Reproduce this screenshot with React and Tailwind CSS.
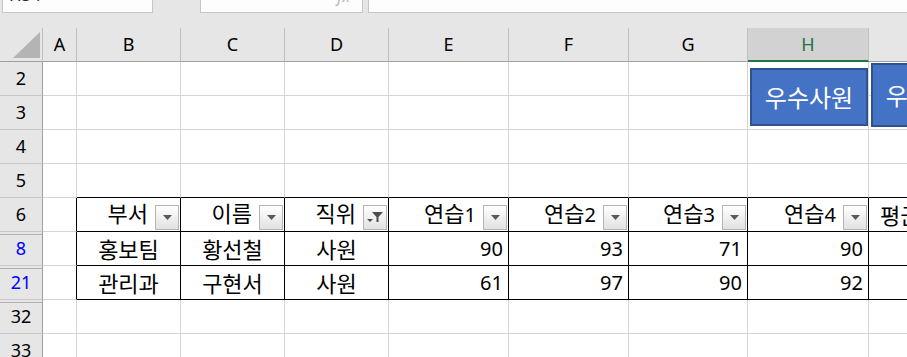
import React from "react";

const cols = [
  { k: "A", w: "w-[34px]" },
  { k: "B", w: "w-[104px]" },
  { k: "C", w: "w-[104px]" },
  { k: "D", w: "w-[104px]" },
  { k: "E", w: "w-[120px]" },
  { k: "F", w: "w-[120px]" },
  { k: "G", w: "w-[119px]" },
  { k: "H", w: "w-[121px]" },
  { k: "I", w: "w-[120px]" },
];

const header = ["부서", "이름", "직위", "연습1", "연습2", "연습3", "연습4"];
const data = {
  8: ["홍보팀", "황선철", "사원", 90, 93, 71, 90],
  21: ["관리과", "구현서", "사원", 61, 97, 90, 92],
};
const rows = [2, 3, 4, 5, 6, 8, 21, 32, 33];
const hiddenBefore = [8, 21, 32];

// hangul a bit larger than the digits, like Malgun Gothic
function Label({ text }) {
  const m = String(text).match(/^(\D*)(\d*)$/);
  return (
    <span className="leading-none whitespace-nowrap">
      {m[1] && <span className="text-[22px]">{m[1]}</span>}
      {m[2] && <span className="text-[20px]">{m[2]}</span>}
    </span>
  );
}

function DropDown({ filter }) {
  return (
    <div className="self-end mb-[1px] mr-[1px] w-[24px] h-[25px] shrink-0 border border-[#b4b4b4] bg-gradient-to-b from-white to-[#e2e2e2] flex items-center justify-center">
      {filter ? (
        <svg width="18" height="13" viewBox="0 0 18 13">
          <polygon points="6,1 17,1 12.5,6 12.5,11 10.5,11 10.5,6" fill="#4d4d4d" />
          <polygon points="1,8 7,8 4,11" fill="#4d4d4d" />
        </svg>
      ) : (
        <svg width="9" height="5" viewBox="0 0 9 5">
          <polygon points="0,0 9,0 4.5,5" fill="#595959" />
        </svg>
      )}
    </div>
  );
}

function Cell({ row, ci }) {
  const col = cols[ci];
  const inTable = row === 6 || row === 8 || row === 21;
  const tableCol = ci >= 1;
  let border = "border-r border-b border-[#d4d4d4]";
  if (inTable && tableCol) border = "border-r border-b border-black";
  else if (inTable && ci === 0) border = "border-r border-b border-r-black border-b-[#d4d4d4]";
  else if (row === 5 && tableCol) border = "border-r border-b border-r-[#d4d4d4] border-b-black";

  let content = null;
  if (row === 6 && ci >= 1 && ci <= 7) {
    content = (
      <div className="flex h-full items-center justify-end">
        <span className="mr-[7px]">
          <Label text={header[ci - 1]} />
        </span>
        <DropDown filter={ci === 3} />
      </div>
    );
  } else if (row === 6 && ci === 8) {
    content = (
      <div className="flex h-full items-center pl-[11px]">
        <Label text="평균" />
      </div>
    );
  } else if (data[row] && ci >= 1 && ci <= 3) {
    content = (
      <div className="flex h-full items-center justify-center">
        <Label text={data[row][ci - 1]} />
      </div>
    );
  } else if (data[row] && ci >= 4 && ci <= 7) {
    content = (
      <div className="flex h-full items-center justify-end pr-[5px]">
        <Label text={data[row][ci - 1]} />
      </div>
    );
  }

  return <div className={`${col.w} h-[34px] shrink-0 bg-white ${border}`}>{content}</div>;
}

export default function App() {
  return (
    <div className="relative w-[907px] h-[357px] overflow-hidden bg-[#e6e6e6] font-['Noto_Sans','Noto_Sans_CJK_KR',sans-serif] text-black">
      {/* formula bar */}
      <div className="flex h-[28px] items-start">
        <div className="ml-[2px] w-[151px] h-[13px] bg-[#fdfdfd] border border-t-0 border-[#c6c6c6] overflow-hidden relative">
          <span className="absolute left-[6px] -top-[14px] text-[17px] leading-none text-[#222]">H34</span>
        </div>
        <div className="ml-[47px] w-[163px] h-[13px] bg-[#fdfdfd] border border-t-0 border-[#c6c6c6] overflow-hidden relative">
          <span className="absolute right-[12px] -top-[12px] text-[16px] italic leading-none text-[#b8b8b8]">fx</span>
        </div>
        <div className="ml-[5px] flex-1 h-[13px] bg-[#fdfdfd] border border-t-0 border-r-0 border-[#c6c6c6]" />
      </div>

      {/* column header */}
      <div className="flex h-[34px]">
        <div className="relative w-[43px] shrink-0 border-r border-b border-r-[#c0c0c0] border-b-[#a0a0a0]">
          <svg className="absolute left-[13px] top-[4px]" width="27" height="26" viewBox="0 0 27 26">
            <polygon points="27,0 27,26 0,26" fill="#b4b4b4" />
          </svg>
        </div>
        {cols.map((c) =>
          c.k === "H" ? (
            <div
              key={c.k}
              className={`${c.w} shrink-0 flex items-center justify-center bg-[#d2d2d2] border-r border-r-[#c0c0c0] border-b-2 border-b-[#217346] text-[#217346] text-[18px]`}
            >
              {c.k}
            </div>
          ) : (
            <div
              key={c.k}
              className={`${c.w} shrink-0 flex items-center justify-center border-r border-b border-r-[#c0c0c0] border-b-[#a0a0a0] text-[18px]`}
            >
              {c.k}
            </div>
          )
        )}
      </div>

      {/* rows */}
      <div>
        {rows.map((r) => (
          <div key={r} className="flex">
            <div
              className={`relative w-[43px] h-[34px] shrink-0 flex items-center justify-center border-r border-b border-r-[#9f9f9f] border-b-[#c8c8c8] text-[18px] ${
                r === 8 || r === 21 ? "text-[#0000ff]" : "text-black"
              }`}
            >
              {hiddenBefore.includes(r) && <div className="absolute left-0 right-0 top-[2px] h-px bg-[#b0b0b0]" />}
              {r}
            </div>
            {cols.map((c, ci) => (
              <Cell key={c.k} row={r} ci={ci} />
            ))}
          </div>
        ))}
      </div>

      {/* shapes */}
      <div className="absolute left-[750px] top-[68px] w-[118px] h-[58px] bg-[#4472c4] border-2 border-[#2f528f] flex items-center justify-center text-white text-[24px] whitespace-nowrap font-['Noto_Sans_CJK_KR',sans-serif]">
        우수사원
      </div>
      <div className="absolute left-[871px] top-[63px] w-[118px] h-[64px] bg-[#4472c4] border-2 border-[#2f528f] flex items-center justify-center text-white text-[24px] whitespace-nowrap font-['Noto_Sans_CJK_KR',sans-serif]">
        우수사원
      </div>
    </div>
  );
}
